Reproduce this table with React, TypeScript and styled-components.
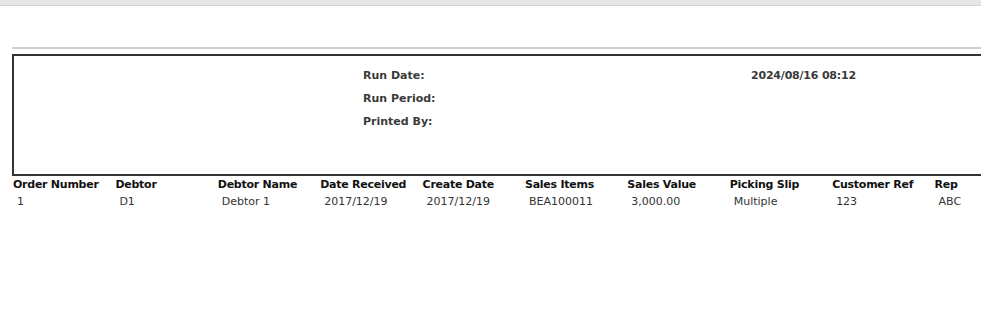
import styled, { createGlobalStyle } from "styled-components";

const GlobalStyle = createGlobalStyle`
  html, body {
    margin: 0;
    padding: 0;
    background: #ffffff;
  }
  body {
    font-family: "DejaVu Sans", Verdana, sans-serif;
    font-size: 11px;
    color: #333333;
  }
`;

const TopBar = styled.div`
  height: 5px;
  background: #e6e6e6;
  border-bottom: 1px solid #d2d2d2;
`;

const Sheet = styled.div`
  padding: 41px 0 0 12px;
`;

const Rule = styled.div`
  height: 2px;
  background: #cfcfcf;
`;

const HeaderBox = styled.div`
  box-sizing: border-box;
  margin-top: 5px;
  height: 122px;
  border: 2px solid #333333;
  border-right: none;
  padding: 8px 0 0 349px;
  display: grid;
  grid-template-columns: 388px auto;
  grid-auto-rows: 23px;
  align-content: start;
`;

const Label = styled.span`
  font-weight: bold;
  color: #3a3a3a;
  line-height: 23px;
`;

const Value = styled.span`
  font-weight: bold;
  color: #3a3a3a;
  line-height: 23px;
  letter-spacing: -0.2px;
`;

const Table = styled.div`
  margin-left: 1px;
`;

const Row = styled.div`
  display: grid;
  grid-template-columns: repeat(9, 102.4px) auto;
  height: 17px;
  align-items: center;
`;

const HeadCell = styled.span`
  font-weight: bold;
  color: #111111;
  letter-spacing: -0.25px;
  white-space: nowrap;
`;

const Cell = styled.span<{ $indent?: number }>`
  padding-left: ${(p) => p.$indent ?? 4}px;
  color: #333333;
  white-space: nowrap;
`;

const columns = [
  "Order Number",
  "Debtor",
  "Debtor Name",
  "Date Received",
  "Create Date",
  "Sales Items",
  "Sales Value",
  "Picking Slip",
  "Customer Ref",
  "Rep",
];

const rows = [
  [
    "1",
    "D1",
    "Debtor 1",
    "2017/12/19",
    "2017/12/19",
    "BEA100011",
    "3,000.00",
    "Multiple",
    "123",
    "ABC",
  ],
];

const App = () => {
  return (
    <>
      <GlobalStyle />
      <TopBar />
      <Sheet>
        <Rule />
        <HeaderBox>
          <Label>Run Date:</Label>
          <Value>2024/08/16 08:12</Value>
          <Label>Run Period:</Label>
          <Value />
          <Label>Printed By:</Label>
          <Value />
        </HeaderBox>
        <Table>
          <Row>
            {columns.map((c) => (
              <HeadCell key={c}>{c}</HeadCell>
            ))}
          </Row>
          {rows.map((r, i) => (
            <Row key={i}>
              {r.map((v, j) => (
                <Cell key={j}>{v}</Cell>
              ))}
            </Row>
          ))}
        </Table>
      </Sheet>
    </>
  );
};

export default App;
